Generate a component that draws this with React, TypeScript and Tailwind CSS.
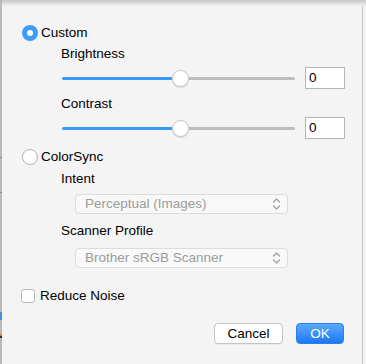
import React from "react";

const font = { fontFamily: '"Liberation Sans", Arial, sans-serif' };

function Slider() {
  return (
    <div className="flex items-center w-[233px] h-[22px]">
      <div className="h-[3px] w-[110px] bg-[#3b99fc] rounded-l-full" />
      <div className="w-[17px] h-[17px] rounded-full bg-white border border-[#c6c6c6] shadow-[0_1px_1px_rgba(0,0,0,0.12)] shrink-0" />
      <div className="h-[3px] flex-1 bg-[#bdbdbd] rounded-r-full" />
    </div>
  );
}

function NumberBox() {
  return (
    <div className="w-[40px] h-[22px] bg-white border border-[#b5b5b5] flex items-center pl-[3px] text-[13.5px] text-black leading-none">
      0
    </div>
  );
}

function Chevrons() {
  return (
    <svg width="9" height="14" viewBox="0 0 9 14" fill="none" stroke="#a0a0a0" strokeWidth="1.3" strokeLinecap="round" strokeLinejoin="round">
      <path d="M1.5 5 L4.5 2 L7.5 5" />
      <path d="M1.5 9 L4.5 12 L7.5 9" />
    </svg>
  );
}

function Popup({ label }: { label: string }) {
  return (
    <div className="ml-[14px] w-[213px] h-[20px] bg-[#f9f9f9] border border-[#dcdcdc] rounded-[4px] flex items-center justify-between pl-[9px] pr-[6px]">
      <span className="text-[13.5px] text-[#9b9b9b] leading-none">{label}</span>
      <Chevrons />
    </div>
  );
}

export default function App() {
  return (
    <div className="w-[366px] h-[364px] bg-[#f4f4f4] flex overflow-hidden" style={font}>
      <div className="w-[2px] flex flex-col bg-[#b9b9b9]">
        <div className="h-[157px]" />
        <div className="h-[1px] bg-[#8a8a8a]" />
        <div className="h-[34px]" />
        <div className="h-[1px] bg-[#8a8a8a]" />
        <div className="h-[119px]" />
        <div className="h-[8px] bg-[#4a90d9]" />
        <div className="h-[14px]" />
        <div className="h-[2px] bg-[#c58a3a]" />
        <div className="h-[2px] bg-[#333]" />
      </div>
      <div className="flex-1 flex flex-col">
        <div className="h-[6px] bg-gradient-to-b from-[#c6c6c6] to-[#f2f2f2]" />
        <div className="flex-1 flex">
          <div className="flex-1 flex flex-col pt-[19px] pl-[20px] text-[13.5px] leading-[16px] text-black">
            {/* Custom */}
            <div className="flex items-center h-[16px]">
              <div className="w-[16px] h-[16px] rounded-full bg-[#3d9bfc] flex items-center justify-center">
                <div className="w-[6px] h-[6px] rounded-full bg-white" />
              </div>
              <span className="ml-[3px]">Custom</span>
            </div>
            <div className="mt-[5px] pl-[39px] h-[16px]">Brightness</div>
            <div className="mt-[5px] pl-[40px] flex items-center gap-[10px]">
              <Slider />
              <NumberBox />
            </div>
            <div className="mt-[7px] pl-[39px] h-[16px]">Contrast</div>
            <div className="mt-[5px] pl-[40px] flex items-center gap-[10px]">
              <Slider />
              <NumberBox />
            </div>
            {/* ColorSync */}
            <div className="mt-[10px] flex items-center h-[16px]">
              <div className="w-[16px] h-[16px] rounded-full bg-white border border-[#b3b3b3]" />
              <span className="ml-[3px]">ColorSync</span>
            </div>
            <div className="mt-[6px] pl-[39px] h-[16px]">Intent</div>
            <div className="mt-[7px] pl-[39px]">
              <Popup label="Perceptual (Images)" />
            </div>
            <div className="mt-[9px] pl-[39px] h-[16px]">Scanner Profile</div>
            <div className="mt-[9px] pl-[39px]">
              <Popup label="Brother sRGB Scanner" />
            </div>
            {/* Reduce Noise */}
            <div className="mt-[20px] flex items-center h-[16px] -ml-[1px]">
              <div className="w-[14px] h-[14px] rounded-[3px] bg-white border border-[#b8b8b8]" />
              <span className="ml-[5px]">Reduce Noise</span>
            </div>
            <div className="mt-[19px] flex justify-end pr-[18px] gap-[13px]">
              <div className="w-[69px] h-[21px] bg-white border border-[#c4c4c4] rounded-[4px] flex items-center justify-center shadow-[0_1px_0_rgba(0,0,0,0.04)]">
                Cancel
              </div>
              <div className="w-[48px] h-[21px] rounded-[4px] bg-gradient-to-b from-[#5aaafd] to-[#1a78f3] border border-[#2a7fe8] text-white flex items-center justify-center">
                OK
              </div>
            </div>
          </div>
          <div className="w-[4px] flex flex-col">
            <div className="w-[1px] flex-1 bg-[#c2c2c2] ml-[0px]" />
          </div>
        </div>
      </div>
    </div>
  );
}
